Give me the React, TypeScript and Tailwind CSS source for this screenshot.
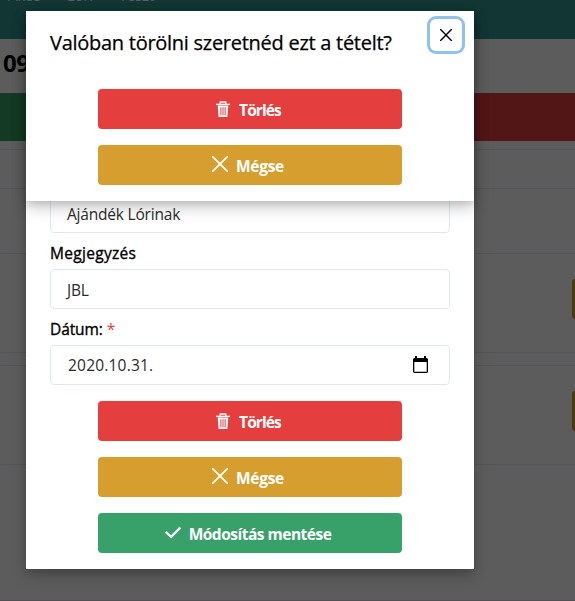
import React from "react";

function TrashIcon() {
  return (
    <svg className="mt-px h-4 w-4 shrink-0" viewBox="0 0 16 16" fill="none" stroke="white">
      <path d="M5.2 3V1h5.6v2" strokeWidth="1.3" />
      <path d="M1 3.4h14" strokeWidth="1.4" />
      <path d="M2.7 4.5h10.6l-.9 11.5H3.6z M5.4 6.2v8h1v-8z M7.5 6.2v8h1v-8z M9.6 6.2v8h1v-8z" fill="white" fillRule="evenodd" stroke="none" />
    </svg>
  );
}

function CrossIcon() {
  return (
    <svg className="h-4 w-4 shrink-0" viewBox="0 0 16 16" fill="none" stroke="white" strokeWidth="1.7" strokeLinecap="round">
      <path d="M.6.6l14.8 14.8M15.4.6L.6 15.4" />
    </svg>
  );
}

function CheckIcon() {
  return (
    <svg className="h-4 w-4 shrink-0" viewBox="0 0 16 16" fill="none" stroke="white" strokeWidth="2.3">
      <path d="M.7 7.8l5.5 5L15.3 3.5" />
    </svg>
  );
}

function CalendarIcon() {
  return (
    <svg className="h-[18px] w-[15px]" viewBox="0 0 15 18">
      <path d="M2 0h2v2h7V0h2v2h1l1 1v13l-1 1H1l-1-1V3l1-1h1z M1.3 6v9.7h12.4V6z" fill="black" fillRule="evenodd" />
    </svg>
  );
}

type ActionProps = { color: string; icon: React.ReactNode; label: string; text: string };

function Action({ color, icon, label, text }: ActionProps) {
  return (
    <button className={`flex h-10 w-[304px] items-center justify-center gap-2 rounded pr-1 text-white ${color}`}>
      <span className="-mt-0.5">{icon}</span>
      <span className={`pt-0.5 text-[15.5px] leading-5 font-bold whitespace-nowrap ${text}`}>{label}</span>
    </button>
  );
}

function DeleteAction() {
  return <Action color="bg-[#e53e3e]" icon={<TrashIcon />} label="Törlés" text="tracking-[-0.9px]" />;
}

function CancelAction() {
  return <Action color="bg-[#d69e2e]" icon={<CrossIcon />} label="Mégse" text="tracking-[-0.3px]" />;
}

function Page() {
  return (
    <div className="flex h-full flex-col bg-[#5c5c5c]">
      <div className="h-[39px] shrink-0 overflow-hidden bg-[#123634]">
        <div className="-mt-[15px] flex gap-[26px] pl-2 text-[15px] leading-5 tracking-[-0.2px] text-[#5c5c5c]">
          <span>Ákos</span>
          <span>Lóri</span>
          <span>Teszt</span>
        </div>
      </div>
      <div className="h-[54px] shrink-0 pt-2 pl-[3px] text-2xl leading-8 font-bold tracking-[-0.5px] text-black">09</div>
      <div className="flex h-12 shrink-0">
        <div className="flex-1 bg-[#143924]" />
        <div className="flex-1 bg-[#521616]" />
      </div>
      <div className="mt-2 h-10 shrink-0 border-y border-[#515356]" />
      <div className="h-[65px] shrink-0 border-b border-[#515356]" />
      <div className="flex h-[99px] shrink-0 justify-end border-b border-[#515356] pt-[25px]">
        <div className="h-10 w-[3px] rounded-l bg-[#4d3910]" />
      </div>
      <div className="mt-3 flex h-[100px] shrink-0 justify-end border-y border-[#515356] pt-[25px]">
        <div className="h-10 w-[3px] rounded-l bg-[#4d3910]" />
      </div>
      <div className="mt-auto h-px bg-[#534f55]" />
    </div>
  );
}

function EditDialog() {
  return (
    <div className="absolute top-[11px] left-[26px] flex h-[558px] w-[448px] flex-col bg-white px-6 pt-[182px] shadow-[0_7px_14px_0_rgba(0,0,0,0.2),0_3px_6px_0_rgba(0,0,0,0.1)]">
      <div className="flex h-10 shrink-0 items-center rounded border border-[#e2e8f0] px-4 pt-[3px] text-[15.5px] tracking-[-0.2px] text-[#2b2b2b]">Ajándék Lórinak</div>
      <div className="flex h-9 shrink-0 items-center pt-1.5 text-[15.5px] font-medium tracking-[0.3px] [-webkit-text-stroke:0.35px_black]">Megjegyzés</div>
      <div className="flex h-10 shrink-0 items-center rounded border border-[#e2e8f0] px-4 pt-1 text-[15.5px] tracking-[-0.2px] text-[#2b2b2b]">JBL</div>
      <div className="flex h-9 shrink-0 items-center gap-1 pt-1.5 text-[15.5px] font-medium tracking-[-0.1px]">
        <span className="[-webkit-text-stroke:0.35px_black]">Dátum:</span>
        <span className="font-normal text-[#e53e3e]">*</span>
      </div>
      <div className="flex h-10 shrink-0 items-center justify-between rounded border border-[#e2e8f0] pr-[21px] pl-[17px] text-[15.5px] tracking-[0.2px] text-[#2b2b2b]">
        <span className="pt-0.5">2020.10.31.</span>
        <CalendarIcon />
      </div>
      <div className="mt-4 flex flex-col items-center gap-4">
        <DeleteAction />
        <CancelAction />
        <Action color="bg-[#38a169]" icon={<CheckIcon />} label="Módosítás mentése" text="tracking-[-0.5px]" />
      </div>
    </div>
  );
}

function ConfirmDialog() {
  return (
    <div className="absolute top-[11px] left-[26px] h-[190px] w-[448px] bg-white shadow-[0_7px_14px_0_rgba(0,0,0,0.2),0_3px_6px_0_rgba(0,0,0,0.1)]">
      <h2 className="px-6 pt-4 text-xl leading-8 font-medium tracking-[-0.27px] whitespace-nowrap [-webkit-text-stroke:0.25px_black]">Valóban törölni szeretnéd ezt a tételt?</h2>
      <button aria-label="Bezárás" className="absolute top-2 right-3 flex h-8 w-8 items-center justify-center rounded-md shadow-[0_0_0_3px_#90c2ee]">
        <svg className="h-3 w-3" viewBox="0 0 12 12" fill="none" stroke="black" strokeWidth="1.4" strokeLinecap="round">
          <path d="M.6.6l10.8 10.8M11.4.6L.6 11.4" />
        </svg>
      </button>
      <div className="mt-[30px] flex flex-col items-center gap-4">
        <DeleteAction />
        <CancelAction />
      </div>
    </div>
  );
}

export default function App() {
  return (
    <div className="relative h-[601px] w-[575px] overflow-hidden font-['Open_Sans','Noto_Sans',sans-serif] text-black">
      <Page />
      <EditDialog />
      <ConfirmDialog />
    </div>
  );
}
